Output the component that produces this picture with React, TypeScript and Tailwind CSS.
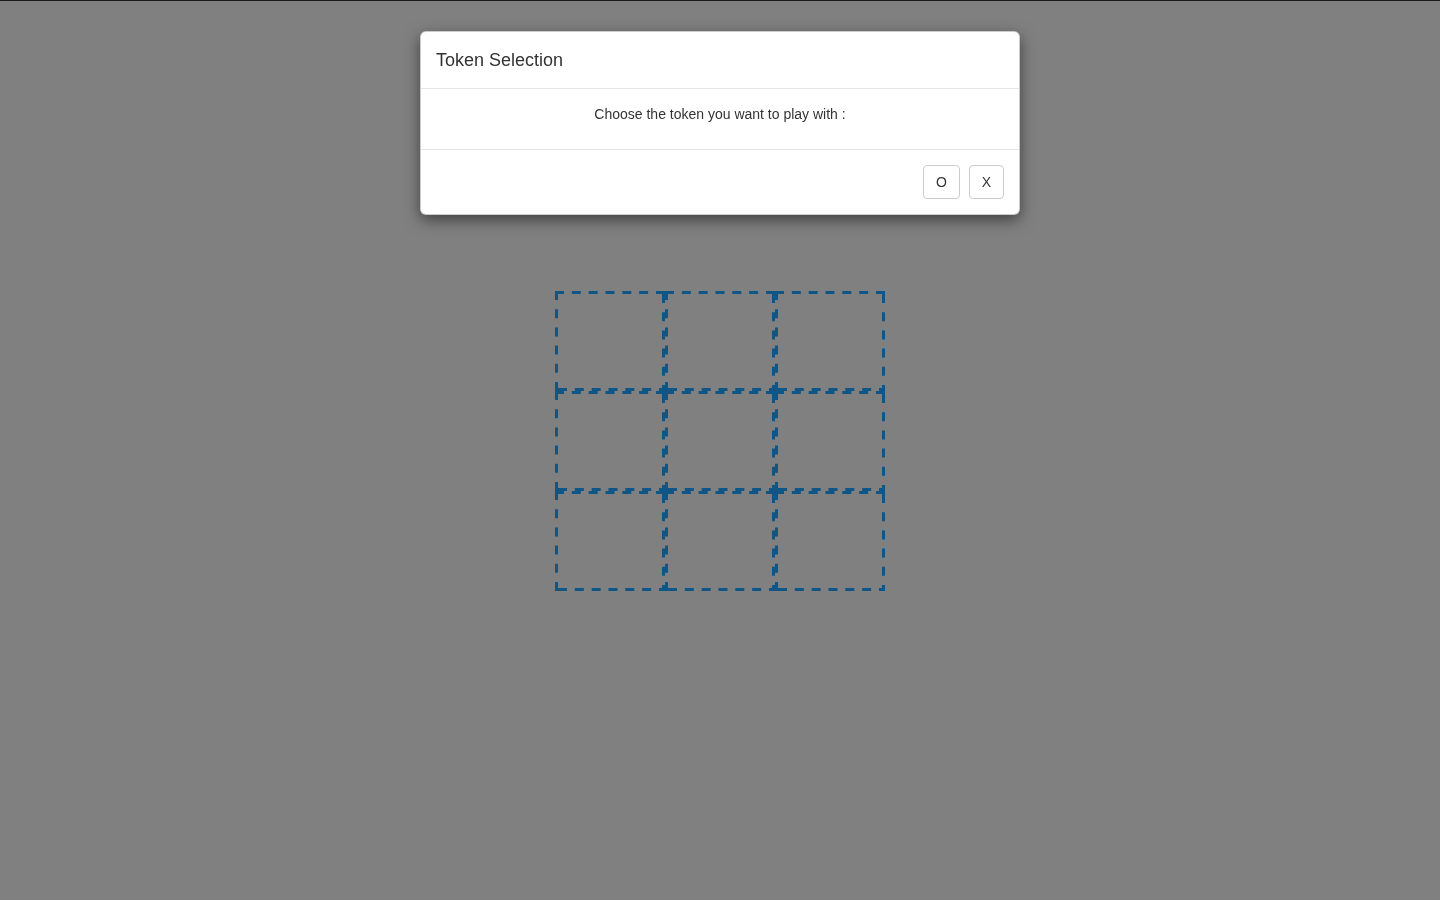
const cells = [0, 1, 2, 3, 4, 5, 6, 7, 8];

// dashed cell outline: 3px strokes, 9px dashes; right/bottom sides shifted a bit
// so that neighbouring borders sit staggered like in the original
const CellBorder = () => (
  <svg className="absolute inset-0" width="110" height="100" viewBox="0 0 110 100">
    <g stroke="#0f5585" strokeWidth="3" fill="none">
      <line x1="0" y1="1.5" x2="110" y2="1.5" strokeDasharray="9 7.83" />
      <line x1="0" y1="98.5" x2="110" y2="98.5" strokeDasharray="9 7.83" strokeDashoffset="-3" />
      <line x1="1.5" y1="0" x2="1.5" y2="100" strokeDasharray="9 9.2" />
      <line x1="108.5" y1="0" x2="108.5" y2="100" strokeDasharray="9 9.2" strokeDashoffset="-3" />
    </g>
  </svg>
);

const Board = () => (
  <div className="mx-auto grid w-[330px] grid-cols-[repeat(3,110px)]">
    {cells.map((c) => (
      <div key={c} className="relative h-[100px] w-[110px]">
        <CellBorder />
      </div>
    ))}
  </div>
);

const TokenModal = () => (
  <div className="fixed inset-0 flex justify-center">
    <div className="mt-[31px] w-[600px] self-start bg-white border border-black/20 rounded-md shadow-[0_5px_15px_rgba(0,0,0,0.5)] text-[#333]">
      <div className="px-[15px] pt-[16px] pb-[14px] border-b border-[#e5e5e5]">
        <h4 className="text-[18px] leading-[25.7px]">Token Selection</h4>
      </div>
      <div className="p-[15px] text-center text-[14px] leading-[20px]">
        <p className="mb-[10px]">Choose the token you want to play with :</p>
      </div>
      <div className="flex justify-end gap-[9px] p-[15px] border-t border-[#e5e5e5]">
        <button className="h-[34px] w-[37px] pt-px bg-white border border-[#ccc] rounded text-[14px] text-[#333]">
          O
        </button>
        <button className="h-[34px] w-[35px] pt-px bg-white border border-[#ccc] rounded text-[14px] text-[#333]">
          X
        </button>
      </div>
    </div>
  </div>
);

export default function App() {
  return (
    <div className="min-h-screen bg-[#808080] font-['Liberation_Sans',Arial,sans-serif]">
      <div className="h-px bg-[#1c1c1c]" />
      <div className="pt-[290px]">
        <Board />
      </div>
      <TokenModal />
    </div>
  );
}
